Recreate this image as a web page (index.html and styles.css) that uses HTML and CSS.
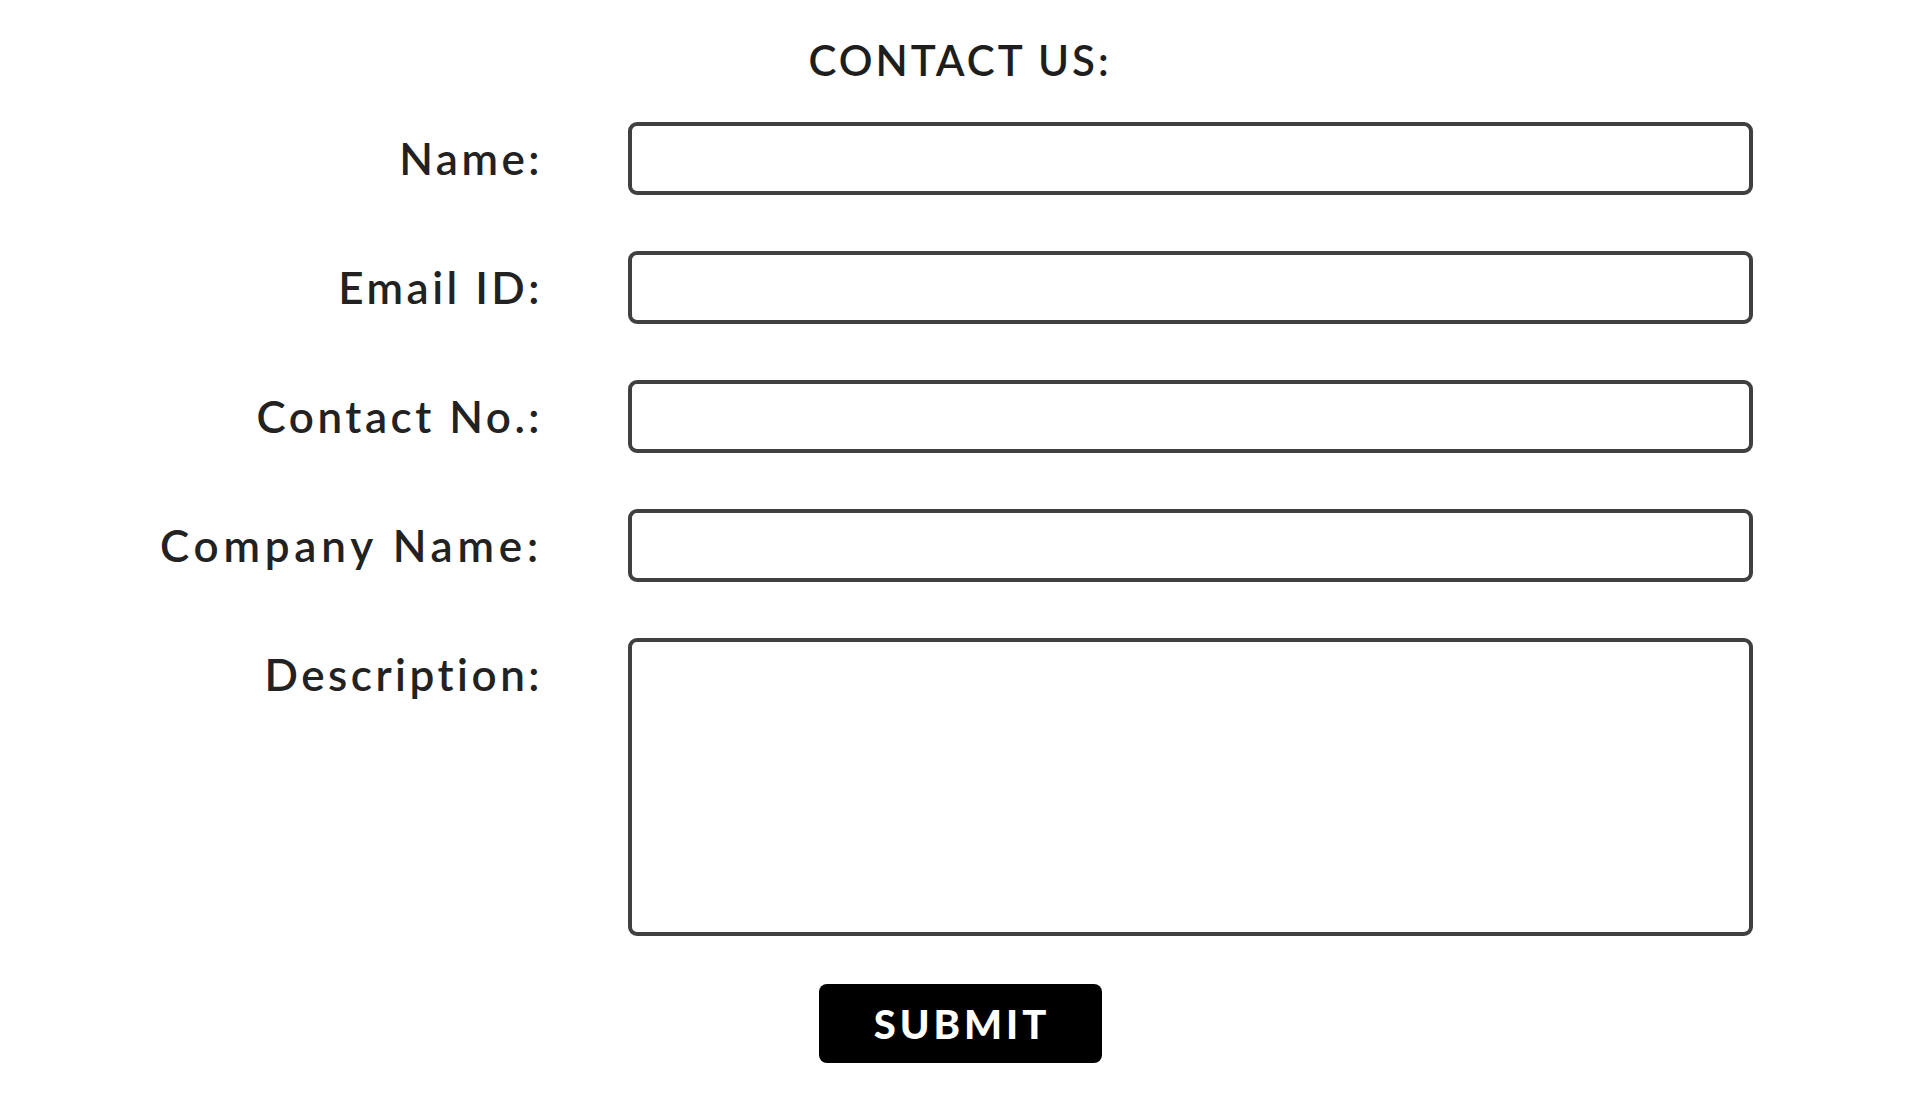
FILE: index.html
```html
<!DOCTYPE html>
<html lang="en">
<head>
<meta charset="utf-8">
<title>Contact Us</title>
<link rel="stylesheet" href="styles.css">
</head>
<body>
<main class="contact">
  <h1 class="contact__title">CONTACT US:</h1>
  <form class="contact__form" onsubmit="return false;">
    <div class="field">
      <label class="field__label" for="name">Name:</label>
      <input class="field__input" id="name" type="text">
    </div>
    <div class="field">
      <label class="field__label" for="email">Email ID:</label>
      <input class="field__input" id="email" type="email">
    </div>
    <div class="field">
      <label class="field__label" for="phone">Contact No.:</label>
      <input class="field__input" id="phone" type="tel">
    </div>
    <div class="field">
      <label class="field__label field__label--wide" for="company">Company Name:</label>
      <input class="field__input" id="company" type="text">
    </div>
    <div class="field field--top">
      <label class="field__label" for="desc">Description:</label>
      <textarea class="field__input field__input--area" id="desc"></textarea>
    </div>
    <div class="contact__actions">
      <button class="contact__submit" type="submit">SUBMIT</button>
    </div>
  </form>
</main>
</body>
</html>
```

FILE: styles.css
```css
* { box-sizing: border-box; }

html, body {
  margin: 0;
  padding: 0;
  background: #ffffff;
}

body {
  font-family: "Lato", "Liberation Sans", sans-serif;
  color: #222222;
}

.contact {
  width: 1920px;
  padding-top: 30px;
}

.contact__title {
  margin: 0 0 32px;
  text-align: center;
  font-size: 42px;
  line-height: 60px;
  font-weight: 600;
  letter-spacing: 3px;
  color: #1e1e1e;
}

.contact__form {
  display: flex;
  flex-direction: column;
  gap: 56px;
}

.field {
  display: flex;
  align-items: center;
  gap: 85px;
}

.field--top {
  align-items: flex-start;
}

.field__label {
  width: 543px;
  text-align: right;
  font-size: 44px;
  line-height: 73px;
  font-weight: 600;
  letter-spacing: 3.5px;
  color: #222222;
}

.field__label--wide {
  letter-spacing: 4.8px;
}

.field__input {
  width: 1125px;
  height: 73px;
  border: 4px solid #404040;
  border-radius: 9px;
  background: #ffffff;
  font: inherit;
  font-size: 24px;
  padding: 0 16px;
  outline: none;
}

.field__input--area {
  height: 298px;
  resize: none;
  padding: 12px 16px;
}

.contact__actions {
  display: flex;
  justify-content: center;
  margin-top: -8px;
}

.contact__submit {
  width: 283px;
  height: 79px;
  border: none;
  border-radius: 8px;
  background: #000000;
  color: #ffffff;
  font-family: "Lato", "Liberation Sans", sans-serif;
  font-size: 40px;
  font-weight: 900;
  letter-spacing: 4px;
  padding: 0 0 0 4px;
  cursor: pointer;
}
```
